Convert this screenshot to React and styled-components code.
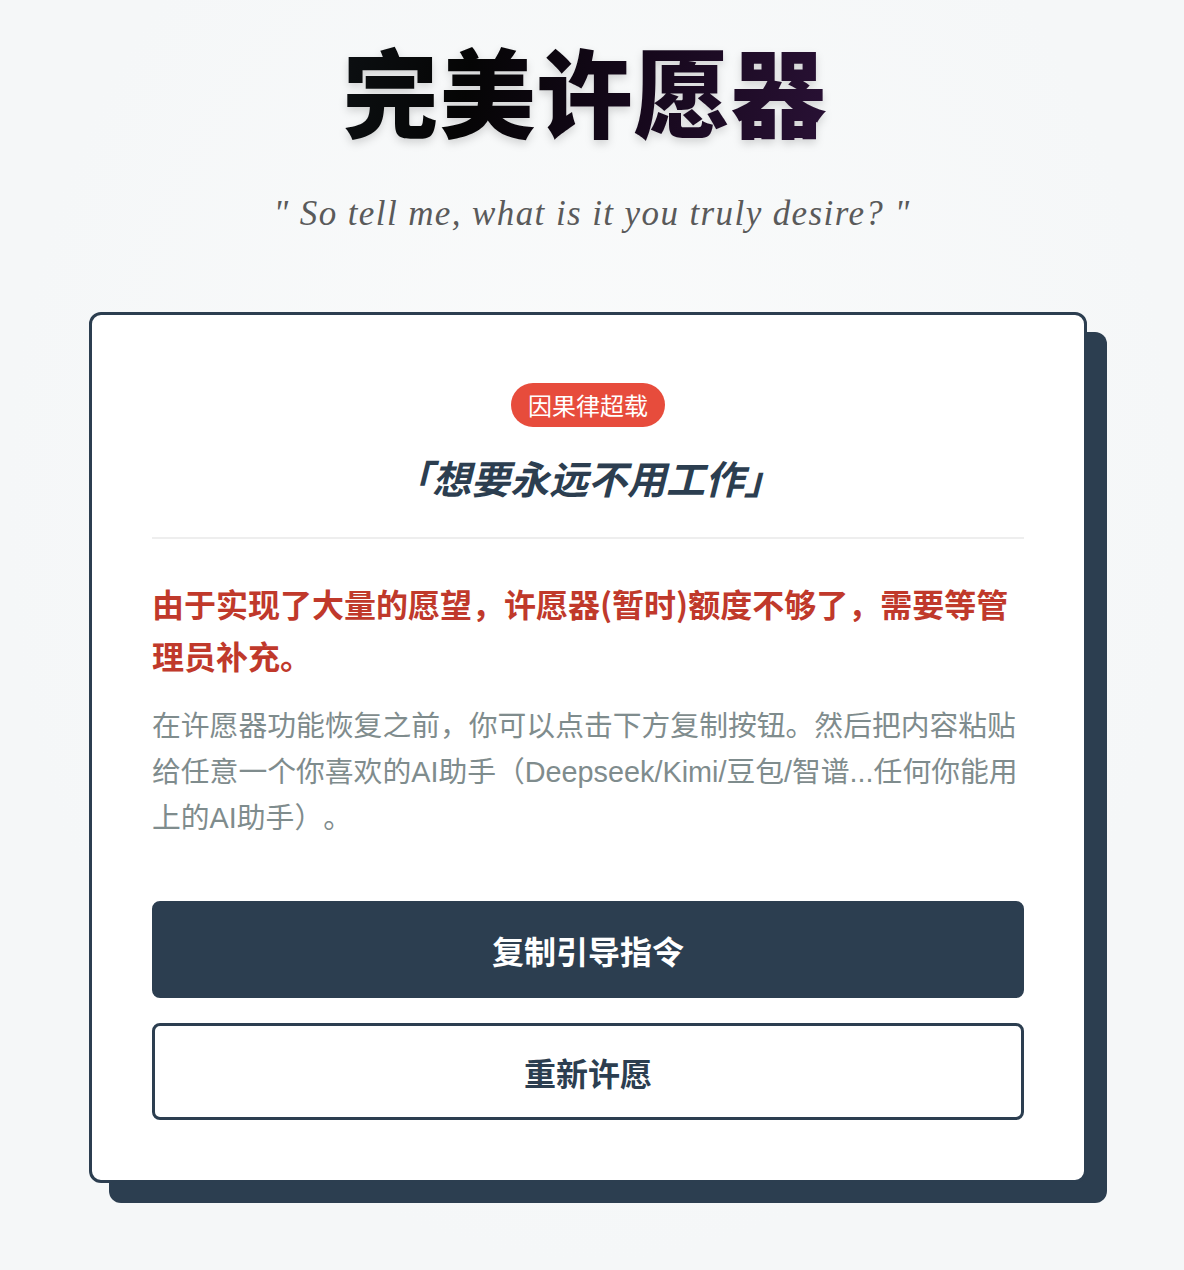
import React from 'react';
import styled, { createGlobalStyle } from 'styled-components';

const GlobalStyle = createGlobalStyle`
  body {
    margin: 0;
    background: #f6f8f9;
    font-family: "Liberation Sans", "Noto Sans CJK SC", sans-serif;
  }
`;

const Page = styled.div`
  min-height: 1270px;
  padding-top: 31px;
  box-sizing: border-box;
  background: radial-gradient(ellipse at 50% 40%, #fafbfb 0%, #f5f7f8 70%);
`;

const Title = styled.h1`
  margin: 0 14px 0 0;
  text-align: center;
  font-family: "Noto Sans CJK SC", sans-serif;
  font-weight: 900;
  font-size: 96px;
  line-height: 1.2;
  letter-spacing: 1px;
  background: linear-gradient(100deg, #1e2a33 0%, #050505 40%, #16081c 55%, #4a2060 100%);
  -webkit-background-clip: text;
  background-clip: text;
  color: transparent;
  filter: drop-shadow(0 4px 4px rgba(0, 0, 0, 0.15));
`;

const Subtitle = styled.p`
  margin: 44px 0 0;
  text-align: center;
  font-family: "Liberation Serif", serif;
  font-style: italic;
  font-size: 35px;
  line-height: 48px;
  letter-spacing: 1.4px;
  color: #5a5a5a;
`;

const Card = styled.div`
  width: 998px;
  box-sizing: border-box;
  margin: 78px auto 0;
  transform: translate(-4px, -4px);
  background: #fff;
  border: 3px solid #2c3e50;
  border-radius: 12px;
  box-shadow: 20px 20px 0 #2c3e50;
  padding: 60px;
  display: flex;
  flex-direction: column;
`;

const BadgeRow = styled.div`
  display: flex;
  justify-content: center;
  margin-top: 8px;
`;

const Badge = styled.span`
  background: #e74c3c;
  color: #fff;
  font-family: "Noto Sans CJK SC", sans-serif;
  font-size: 24px;
  line-height: 44px;
  height: 44px;
  padding: 0 17px;
  border-radius: 22px;
`;

const WishTitle = styled.h2`
  margin: 25px 0 0;
  text-align: center;
  font-family: "Noto Sans CJK SC", sans-serif;
  font-size: 39px;
  font-weight: 700;
  font-style: italic;
  line-height: 50px;
  color: #2c3e50;
`;

const Divider = styled.hr`
  margin: 35px 0 0;
  border: none;
  height: 2px;
  background: #eeeeee;
`;

const Warning = styled.p`
  margin: 38px 0 0;
  font-size: 32px;
  font-weight: 700;
  line-height: 52px;
  color: #c0392b;
  font-family: "Noto Sans CJK SC", sans-serif;
`;

const Hint = styled.p`
  margin: 22px 0 0;
  font-size: 28.8px;
  line-height: 46px;
  color: #7f8c8d;
  text-spacing-trim: space-all;
`;

const Button = styled.button`
  display: block;
  width: 100%;
  height: 97px;
  margin-top: ${(p) => p.$gap}px;
  border-radius: 8px;
  border: 3px solid #2c3e50;
  background: ${(p) => (p.$primary ? '#2c3e50' : '#fff')};
  color: ${(p) => (p.$primary ? '#fff' : '#2c3e50')};
  font-family: "Noto Sans CJK SC", sans-serif;
  font-size: 32px;
  font-weight: 700;
  cursor: pointer;
`;

export default function App() {
  return (
    <>
      <GlobalStyle />
      <Page>
        <Title>完美许愿器</Title>
        <Subtitle>" So tell me, what is it you truly desire? "</Subtitle>
        <Card>
          <BadgeRow>
            <Badge>因果律超载</Badge>
          </BadgeRow>
          <WishTitle>「想要永远不用工作」</WishTitle>
          <Divider />
          <Warning>由于实现了大量的愿望，许愿器(暂时)额度不够了，需要等管理员补充。</Warning>
          <Hint>
            在许愿器功能恢复之前，你可以点击下方复制按钮。然后把内容粘贴给任意一个你喜欢的AI助手（Deepseek/Kimi/豆包/智谱...任何你能用上的AI助手）。
          </Hint>
          <Button $primary $gap={60}>复制引导指令</Button>
          <Button $gap={25}>重新许愿</Button>
        </Card>
      </Page>
    </>
  );
}
